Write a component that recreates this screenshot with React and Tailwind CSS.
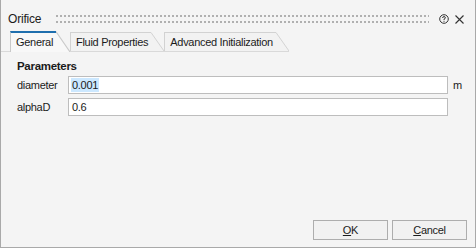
import React from "react";

function Tab({ label, active, slant = 14 }) {
  return (
    <div className={`flex items-stretch shrink-0 ${active ? "h-[21px] -mb-px relative z-10" : "h-[19px] mt-[1px]"}`}>
      <div
        className={`flex items-center pl-[5px] pr-[3px] border-l whitespace-nowrap ${
          active
            ? "border-[#c9c9c9] bg-[#f8f8f8] border-t-2 border-t-[#1f6fae]"
            : "border-[#d2d2d2] bg-[#f2f2f2] border-t"
        }`}
      >
        <span className="leading-none">{label}</span>
      </div>
      <svg width={slant} height="100%" viewBox={`0 0 ${slant} 20`} preserveAspectRatio="none" className="block shrink-0">
        <polygon points={`0,0 0,20 ${slant},20`} fill={active ? "#f8f8f8" : "#f2f2f2"} />
        <line x1="0" y1="0.5" x2={slant} y2="20" stroke={active ? "#c9c9c9" : "#d2d2d2"} strokeWidth="1" />
      </svg>
    </div>
  );
}

export default function App() {
  return (
    <div
      className="w-[476px] h-[248px] bg-[#f4f4f4] border-l border-r border-b border-[#a9a9a9] flex flex-col text-[#1b1b1b] text-[11px] tracking-[-0.3px]"
      style={{ fontFamily: '"Liberation Sans", Arial, sans-serif' }}
    >
      {/* title bar */}
      <div className="h-[31px] shrink-0 flex items-center pl-[7px] pr-[11px] pt-[8px] pb-[1px]">
        <span className="text-[12px] leading-none tracking-[-0.2px]">Orifice</span>
        <div className="flex-1 ml-[15px] mr-[10px] flex flex-col gap-[4px]">
          <div className="h-[2px] bg-[repeating-linear-gradient(to_right,#b0b0b0_0_2px,transparent_2px_4px)]" />
          <div className="h-[2px] bg-[repeating-linear-gradient(to_right,#b0b0b0_0_2px,transparent_2px_4px)]" />
        </div>
        <svg width="10" height="10" viewBox="0 0 10 10" className="mr-[6px]">
          <circle cx="5" cy="5" r="4.3" fill="none" stroke="#333" strokeWidth="1" />
          <path d="M3.6 4 Q3.6 2.6 5 2.6 Q6.4 2.6 6.4 3.8 Q6.4 4.6 5 5.2 L5 6" fill="none" stroke="#333" strokeWidth="1" />
          <rect x="4.5" y="6.8" width="1" height="1" fill="#333" />
        </svg>
        <svg width="9" height="9" viewBox="0 0 9 9">
          <path d="M0.5 0.5 L8.5 8.5 M8.5 0.5 L0.5 8.5" stroke="#333" strokeWidth="1.1" />
        </svg>
      </div>

      {/* tab strip */}
      <div className="h-[21px] shrink-0 self-start flex items-start pl-[9px] border-b border-[#d9d9d9]">
        <Tab label="General" active slant={14} />
        <Tab label="Fluid Properties" slant={13} />
        <Tab label="Advanced Initialization" slant={13} />
      </div>

      {/* content */}
      <div className="flex-1 flex flex-col pl-[16px] pr-[11px] pt-[9px]">
        <div className="font-bold leading-none h-[12px] flex items-center text-[11.5px]">Parameters</div>
        <div className="mt-[3px] flex items-center h-[18px]">
          <span className="w-[51px]">diameter</span>
          <div className="flex-1 h-[18px] bg-white border border-[#bdbdbd] flex items-center pl-[2px]">
            <span className="bg-[#cce8ff] px-[1px] leading-[14px]">0.001</span>
          </div>
          <span className="w-[16px] pl-[5px]">m</span>
        </div>
        <div className="mt-[4px] flex items-center h-[18px]">
          <span className="w-[51px]">alphaD</span>
          <div className="flex-1 h-[18px] bg-white border border-[#bdbdbd] flex items-center pl-[3px]">
            <span className="leading-[14px]">0.6</span>
          </div>
          <span className="w-[16px]" />
        </div>
        <div className="flex-1" />
        <div className="flex justify-end gap-[4px] mb-[7px] -mr-[3px]">
          <button className="w-[75px] h-[20px] bg-[#f1f1f1] border border-[#adadad] flex items-center justify-center">
            <span><span className="underline">O</span>K</span>
          </button>
          <button className="w-[75px] h-[20px] bg-[#f1f1f1] border border-[#adadad] flex items-center justify-center">
            <span><span className="underline">C</span>ancel</span>
          </button>
        </div>
      </div>
    </div>
  );
}
